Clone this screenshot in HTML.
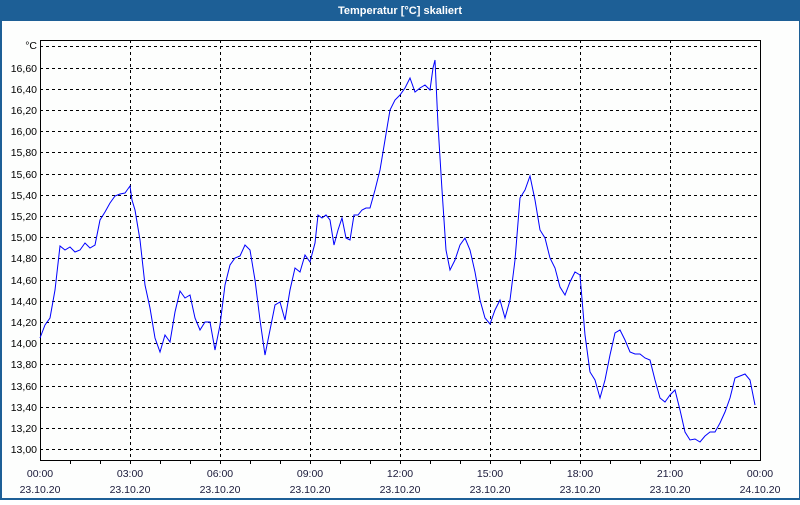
<!DOCTYPE html>
<html><head><meta charset="utf-8"><style>
body{margin:0;width:800px;height:500px;overflow:hidden;background:#fff;font-family:"Liberation Sans",sans-serif}
</style></head><body>
<svg width="800" height="500" xmlns="http://www.w3.org/2000/svg" font-family="Liberation Sans, sans-serif" font-size="10.5">
<rect x="0" y="0" width="800" height="500" fill="#1d5f96"/>
<rect x="2" y="21" width="797" height="477" fill="#fdfefd"/>
<text x="400" y="14" fill="#fff" font-weight="bold" font-size="11" text-anchor="middle">Temperatur [°C] skaliert</text>
<g stroke="#000" stroke-width="1" stroke-dasharray="3,3" shape-rendering="crispEdges">
<line x1="40" x2="760" y1="46.5" y2="46.5"/>
<line x1="40" x2="760" y1="68.5" y2="68.5"/><line x1="40" x2="760" y1="89.5" y2="89.5"/><line x1="40" x2="760" y1="110.5" y2="110.5"/><line x1="40" x2="760" y1="131.5" y2="131.5"/><line x1="40" x2="760" y1="152.5" y2="152.5"/><line x1="40" x2="760" y1="174.5" y2="174.5"/><line x1="40" x2="760" y1="195.5" y2="195.5"/><line x1="40" x2="760" y1="216.5" y2="216.5"/><line x1="40" x2="760" y1="237.5" y2="237.5"/><line x1="40" x2="760" y1="258.5" y2="258.5"/><line x1="40" x2="760" y1="280.5" y2="280.5"/><line x1="40" x2="760" y1="301.5" y2="301.5"/><line x1="40" x2="760" y1="322.5" y2="322.5"/><line x1="40" x2="760" y1="343.5" y2="343.5"/><line x1="40" x2="760" y1="364.5" y2="364.5"/><line x1="40" x2="760" y1="386.5" y2="386.5"/><line x1="40" x2="760" y1="407.5" y2="407.5"/><line x1="40" x2="760" y1="428.5" y2="428.5"/><line x1="40" x2="760" y1="449.5" y2="449.5"/>
<line x1="130.5" x2="130.5" y1="40" y2="460"/><line x1="220.5" x2="220.5" y1="40" y2="460"/><line x1="310.5" x2="310.5" y1="40" y2="460"/><line x1="400.5" x2="400.5" y1="40" y2="460"/><line x1="490.5" x2="490.5" y1="40" y2="460"/><line x1="580.5" x2="580.5" y1="40" y2="460"/><line x1="670.5" x2="670.5" y1="40" y2="460"/>
</g>
<rect x="40.5" y="40.5" width="720" height="420" fill="none" stroke="#000" shape-rendering="crispEdges"/>
<g stroke="#000" shape-rendering="crispEdges">
<line x1="70.5" x2="70.5" y1="460" y2="464"/><line x1="100.5" x2="100.5" y1="460" y2="464"/><line x1="130.5" x2="130.5" y1="460" y2="464"/><line x1="160.5" x2="160.5" y1="460" y2="464"/><line x1="190.5" x2="190.5" y1="460" y2="464"/><line x1="220.5" x2="220.5" y1="460" y2="464"/><line x1="250.5" x2="250.5" y1="460" y2="464"/><line x1="280.5" x2="280.5" y1="460" y2="464"/><line x1="310.5" x2="310.5" y1="460" y2="464"/><line x1="340.5" x2="340.5" y1="460" y2="464"/><line x1="370.5" x2="370.5" y1="460" y2="464"/><line x1="400.5" x2="400.5" y1="460" y2="464"/><line x1="430.5" x2="430.5" y1="460" y2="464"/><line x1="460.5" x2="460.5" y1="460" y2="464"/><line x1="490.5" x2="490.5" y1="460" y2="464"/><line x1="520.5" x2="520.5" y1="460" y2="464"/><line x1="550.5" x2="550.5" y1="460" y2="464"/><line x1="580.5" x2="580.5" y1="460" y2="464"/><line x1="610.5" x2="610.5" y1="460" y2="464"/><line x1="640.5" x2="640.5" y1="460" y2="464"/><line x1="670.5" x2="670.5" y1="460" y2="464"/><line x1="700.5" x2="700.5" y1="460" y2="464"/><line x1="730.5" x2="730.5" y1="460" y2="464"/>
</g>
<g text-anchor="end" fill="#000">
<text x="37" y="49">°C</text>
<text x="37" y="72">16,60</text><text x="37" y="93">16,40</text><text x="37" y="114">16,20</text><text x="37" y="135">16,00</text><text x="37" y="156">15,80</text><text x="37" y="178">15,60</text><text x="37" y="199">15,40</text><text x="37" y="220">15,20</text><text x="37" y="241">15,00</text><text x="37" y="262">14,80</text><text x="37" y="284">14,60</text><text x="37" y="305">14,40</text><text x="37" y="326">14,20</text><text x="37" y="347">14,00</text><text x="37" y="368">13,80</text><text x="37" y="390">13,60</text><text x="37" y="411">13,40</text><text x="37" y="432">13,20</text><text x="37" y="453">13,00</text>
</g>
<g text-anchor="middle" fill="#1a1a3a">
<text x="40" y="477">00:00</text><text x="40" y="493">23.10.20</text>
<text x="130" y="477">03:00</text><text x="130" y="493">23.10.20</text>
<text x="220" y="477">06:00</text><text x="220" y="493">23.10.20</text>
<text x="310" y="477">09:00</text><text x="310" y="493">23.10.20</text>
<text x="400" y="477">12:00</text><text x="400" y="493">23.10.20</text>
<text x="490" y="477">15:00</text><text x="490" y="493">23.10.20</text>
<text x="580" y="477">18:00</text><text x="580" y="493">23.10.20</text>
<text x="670" y="477">21:00</text><text x="670" y="493">23.10.20</text>
<text x="760" y="477">00:00</text><text x="760" y="493">24.10.20</text>
</g>
<polyline fill="none" stroke="#0000ff" stroke-width="1" points="40,338 45,325 50,318 55,290 60,246 65,250 70,247 75,252 80,250 85,243 90,248 95,245 100,220 105,212 110,203 115,196 120,194 125,193 130,186 132,200 135,210 140,240 145,285 150,308 155,338 160,352 165,335 170,342 175,312 180,291 185,298 190,295 195,318 200,330 205,322 210,322 215,350 220,325 225,285 230,265 235,258 240,256 245,245 250,250 255,280 260,320 265,355 270,330 275,305 280,302 285,320 290,290 295,268 300,272 305,255 310,262 315,243 318,215 322,218 326,215 330,220 334,245 338,230 342,218 346,238 350,240 354,215 358,215 362,210 366,208 370,208 375,190 380,170 385,140 390,110 395,100 400,95 405,88 410,78 415,92 420,88 425,85 430,90 433,68 435,60 438,125 442,190 446,250 450,270 455,260 460,245 465,238 470,250 475,272 480,300 485,318 490,324 495,310 500,300 505,318 510,300 515,260 520,198 525,190 530,176 535,200 540,230 545,238 550,258 555,268 560,287 565,295 570,282 575,272 580,275 585,335 590,372 595,380 600,398 605,380 610,355 615,333 620,330 625,340 630,352 635,354 640,354 645,358 650,360 655,380 660,398 665,402 670,395 675,390 680,410 685,432 690,440 695,439 700,442 705,436 710,432 715,432 720,423 725,412 730,398 735,378 740,376 745,374 750,380 755,405"/>
</svg>
</body></html>
